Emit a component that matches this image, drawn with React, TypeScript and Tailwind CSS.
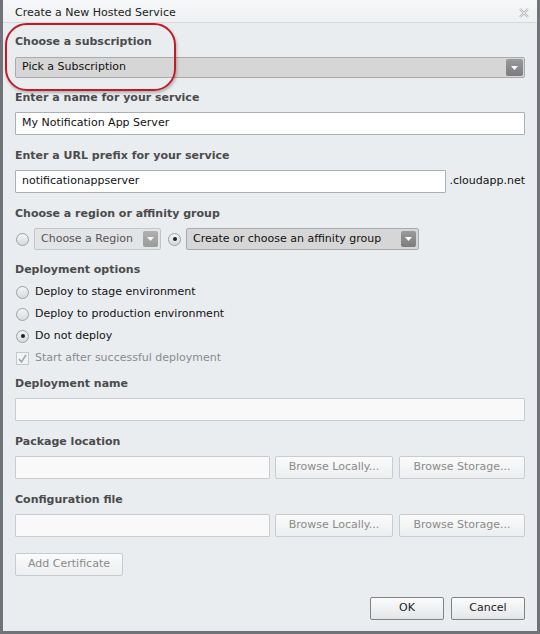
import React from "react";

const font = { fontFamily: '"DejaVu Sans", Verdana, sans-serif' };

function Arrow({ className = "" }: { className?: string }) {
  return (
    <div className={`flex items-center justify-center rounded-[2px] bg-gradient-to-b from-[#9a9a9a] to-[#7c7c7c] ${className}`}>
      <svg width="7" height="4" viewBox="0 0 7 4"><path d="M0 0h7L3.5 4z" fill="#fff" /></svg>
    </div>
  );
}

function Radio({ checked = false }: { checked?: boolean }) {
  return (
    <div className="flex h-[13px] w-[13px] shrink-0 items-center justify-center rounded-full border border-[#9aa0a6] bg-gradient-to-b from-[#f4f4f4] to-[#d8dade]">
      {checked && <div className="h-[4px] w-[4px] rounded-full bg-[#222]" />}
    </div>
  );
}

function Label({ children, className = "" }: { children: React.ReactNode; className?: string }) {
  return <div className={`text-[11px] font-bold leading-[14px] text-[#4b4b4b] ${className}`}>{children}</div>;
}

function Btn({ children, className = "", disabled = false }: { children: React.ReactNode; className?: string; disabled?: boolean }) {
  return (
    <div
      className={`flex h-[23px] shrink-0 items-center justify-center rounded-[2px] border text-[11px] ${
        disabled
          ? "border-[#c8ccd0] bg-gradient-to-b from-[#fbfbfb] to-[#eceeef] text-[#8a8a8a]"
          : "border-[#7f8388] bg-gradient-to-b from-[#fbfbfb] to-[#e4e6e8] text-[#222]"
      } ${className}`}
    >
      {children}
    </div>
  );
}

export default function App() {
  return (
    <div className="h-[634px] w-[540px] bg-white" style={font}>
      <div className="relative flex h-[634px] w-[540px] flex-col border-x-[3px] border-b-[3px] border-[#707478] bg-[#eaedf0]">
        {/* title bar */}
        <div className="flex h-[23px] shrink-0 items-center justify-between border-b border-[#d6dade] bg-gradient-to-b from-[#f6f7f8] to-[#eef0f2] pl-[12px] pr-[8px] pt-[4px]">
          <span className="text-[11px] text-[#222]">Create a New Hosted Service</span>
          <svg width="10" height="10" viewBox="0 0 10 10">
            <path d="M1 1L9 9M9 1L1 9" stroke="#b4b8bc" strokeWidth="2.2" />
            <path d="M1 1L9 9M9 1L1 9" stroke="#f2f3f4" strokeWidth="0.8" />
          </svg>
        </div>

        <div className="flex flex-col px-[12px]">
          <Label className="mt-[12px]">Choose a subscription</Label>
          <div className="mt-[8px] flex h-[21px] items-center justify-between rounded-[2px] border border-[#a8aaac] bg-[#d6d6d6] pl-[6px] pr-[1px]">
            <span className="text-[11px] text-[#111]">Pick a Subscription</span>
            <Arrow className="h-[17px] w-[17px]" />
          </div>

          <Label className="mt-[13px]">Enter a name for your service</Label>
          <div className="mt-[7px] flex h-[23px] items-center rounded-[1px] border border-[#aab0b6] bg-white pl-[6px] text-[11px] text-[#111]">
            My Notification App Server
          </div>

          <Label className="mt-[14px]">Enter a URL prefix for your service</Label>
          <div className="mt-[7px] flex items-center">
            <div className="flex h-[23px] w-[432px] items-center rounded-[1px] border border-[#aab0b6] bg-white pl-[6px] text-[11px] text-[#111]">
              notificationappserver
            </div>
            <span className="ml-[3px] text-[11px] text-[#111]">.cloudapp.net</span>
          </div>

          <Label className="mt-[14px]">Choose a region or affinity group</Label>
          <div className="mt-[7px] flex h-[22px] items-center">
            <div className="ml-[1px]"><Radio /></div>
            <div className="ml-[5px] flex h-[22px] w-[127px] items-center justify-between rounded-[2px] border border-[#c2c6ca] bg-[#e2e4e6] pl-[6px] pr-[2px]">
              <span className="text-[11px] text-[#555]">Choose a Region</span>
              <Arrow className="h-[16px] w-[15px] opacity-70" />
            </div>
            <div className="ml-[7px]"><Radio checked /></div>
            <div className="ml-[5px] flex h-[22px] w-[233px] items-center justify-between rounded-[2px] border border-[#a8aaac] bg-[#d6d6d6] pl-[6px] pr-[2px]">
              <span className="text-[11px] text-[#111]">Create or choose an affinity group</span>
              <Arrow className="h-[16px] w-[15px]" />
            </div>
          </div>

          <Label className="mt-[13px]">Deployment options</Label>
          <div className="mt-[8px] flex flex-col gap-[8px] text-[11px] text-[#111]">
            <div className="flex h-[14px] items-center gap-[6px] pl-[1px]"><Radio /><span>Deploy to stage environment</span></div>
            <div className="flex h-[14px] items-center gap-[6px] pl-[1px]"><Radio /><span>Deploy to production environment</span></div>
            <div className="flex h-[14px] items-center gap-[6px] pl-[1px]"><Radio checked /><span>Do not deploy</span></div>
            <div className="flex h-[14px] items-center gap-[6px] pl-[1px] text-[#8a8a8a]">
              <div className="flex h-[13px] w-[13px] items-center justify-center border border-[#c4c8cc] bg-[#f2f3f4]">
                <svg width="9" height="9" viewBox="0 0 9 9"><path d="M1 5l2.5 3L8 1" stroke="#a0a0a0" strokeWidth="1.4" fill="none" /></svg>
              </div>
              <span>Start after successful deployment</span>
            </div>
          </div>

          <Label className="mt-[12px]">Deployment name</Label>
          <div className="mt-[7px] h-[23px] rounded-[1px] border border-[#c8ccd0] bg-[#f9f9f9]" />

          <Label className="mt-[14px]">Package location</Label>
          <div className="mt-[7px] flex items-center">
            <div className="h-[23px] w-[255px] shrink-0 rounded-[1px] border border-[#c8ccd0] bg-[#f9f9f9]" />
            <Btn disabled className="ml-[5px] w-[118px]">Browse Locally...</Btn>
            <Btn disabled className="ml-[6px] w-[126px]">Browse Storage...</Btn>
          </div>

          <Label className="mt-[14px]">Configuration file</Label>
          <div className="mt-[7px] flex items-center">
            <div className="h-[23px] w-[255px] shrink-0 rounded-[1px] border border-[#c8ccd0] bg-[#f9f9f9]" />
            <Btn disabled className="ml-[5px] w-[118px]">Browse Locally...</Btn>
            <Btn disabled className="ml-[6px] w-[126px]">Browse Storage...</Btn>
          </div>

          <Btn disabled className="mt-[16px] w-[108px]">Add Certificate</Btn>

          <div className="mt-[21px] flex justify-end gap-[7px]">
            <Btn className="w-[74px]">OK</Btn>
            <Btn className="w-[74px]">Cancel</Btn>
          </div>
        </div>

        {/* annotation ellipse */}
        <div className="pointer-events-none absolute left-[2px] top-[23px] h-[68px] w-[171px] rounded-[22px] border-2 border-[#c01c28] shadow-[1px_2px_3px_rgba(0,0,0,0.25)]" />
      </div>
    </div>
  );
}
